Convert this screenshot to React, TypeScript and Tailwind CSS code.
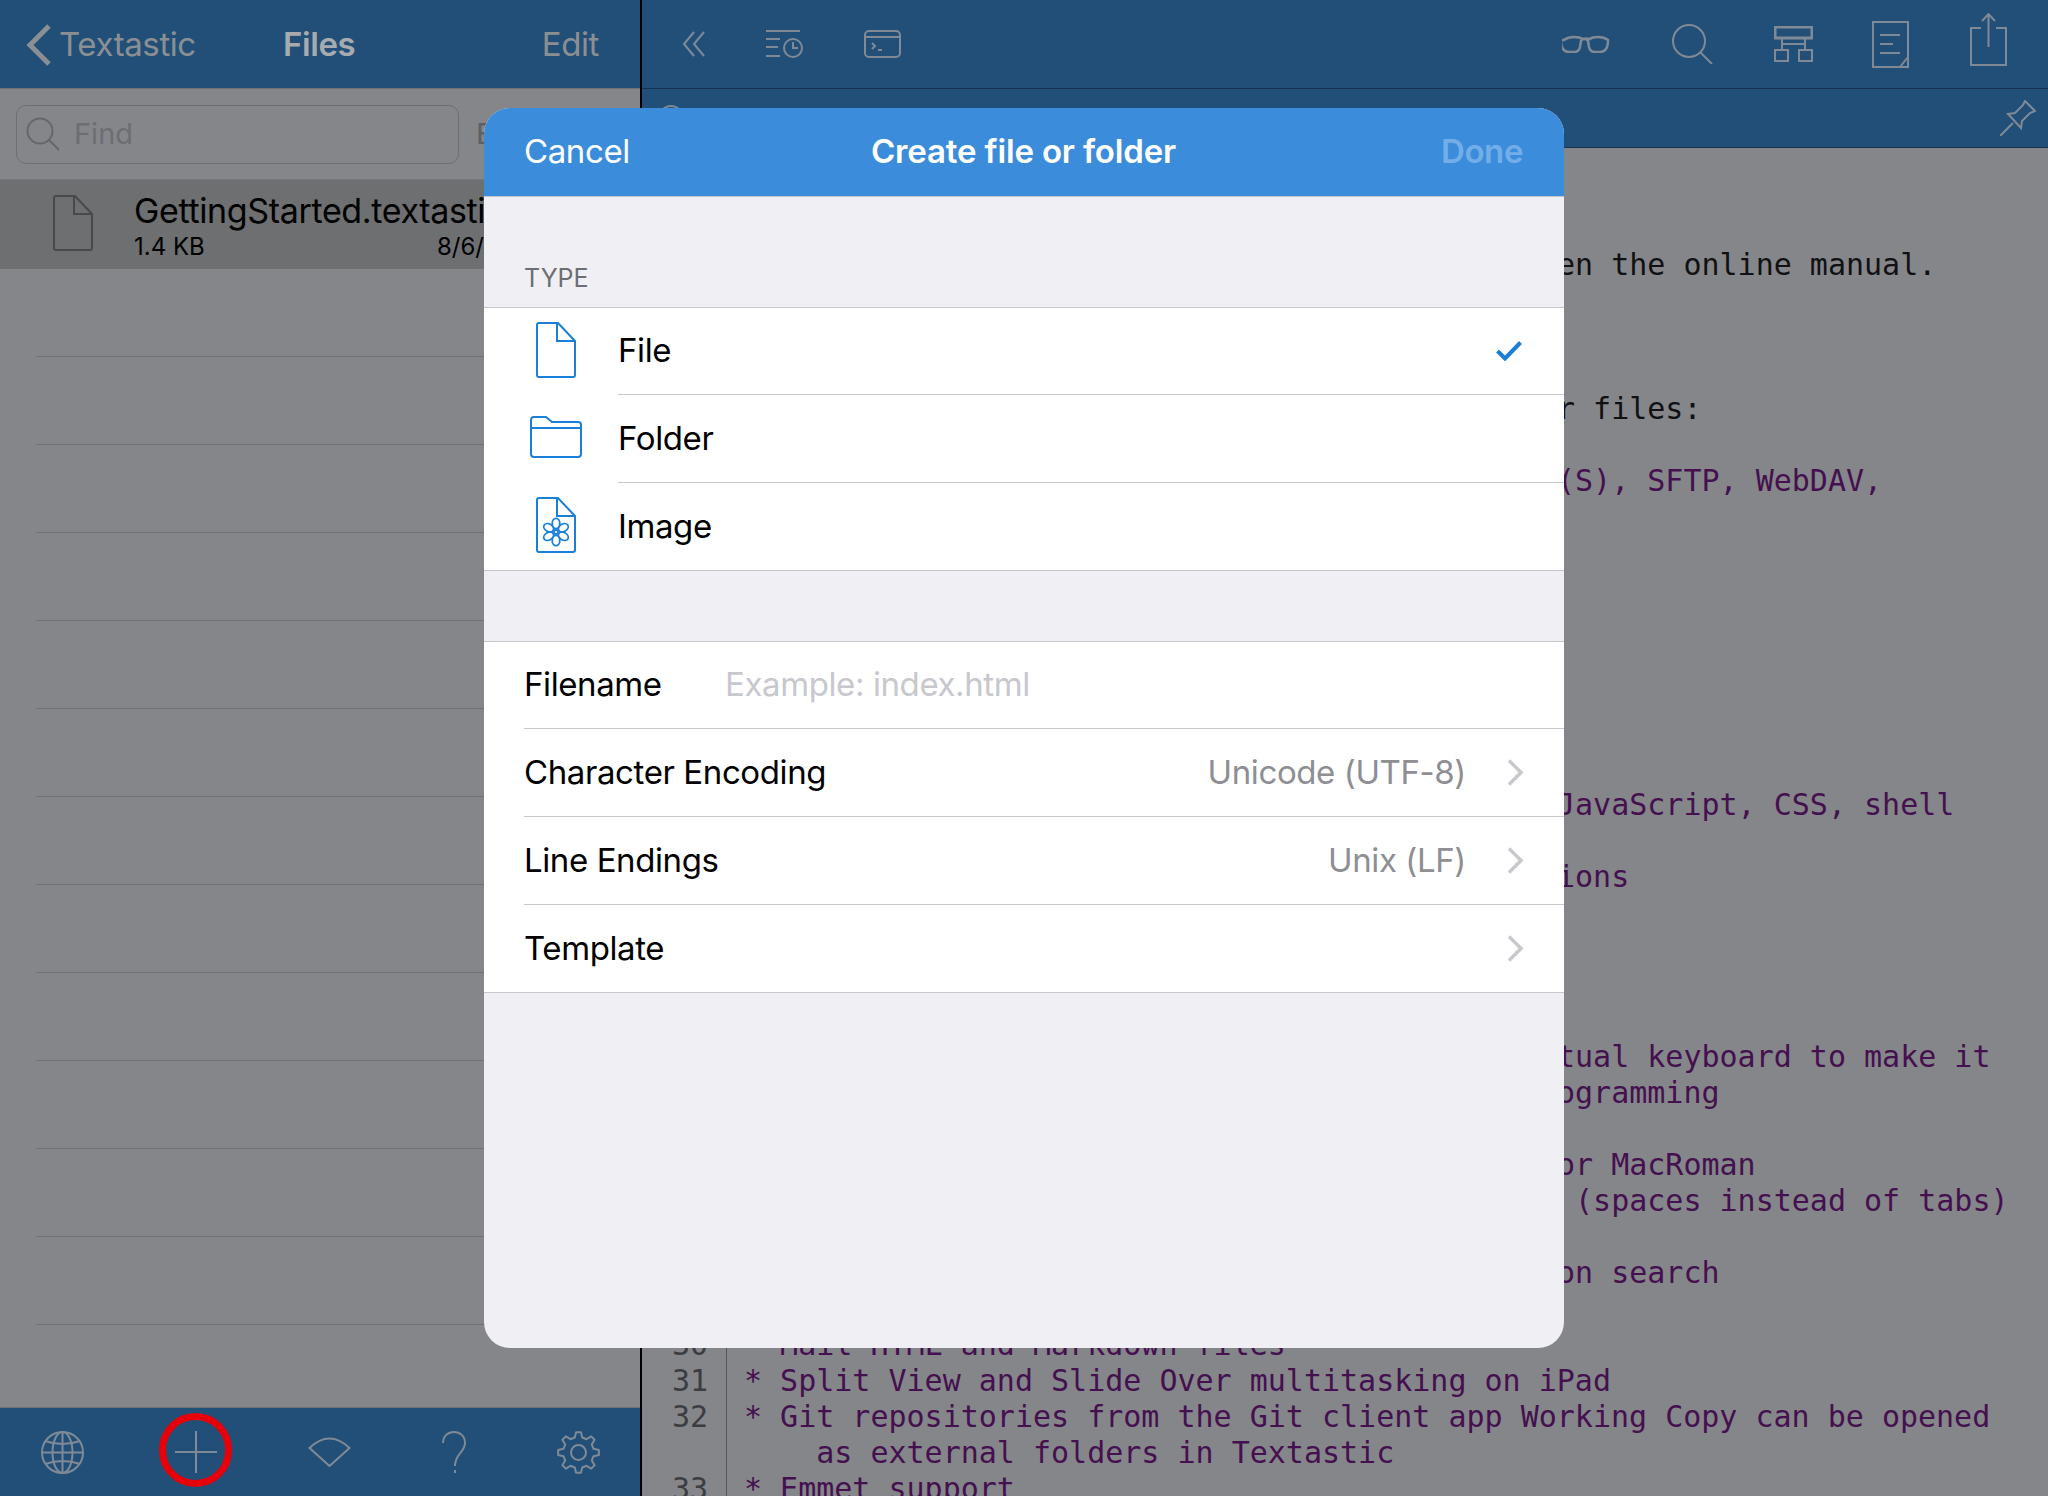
import React from "react";

const dim = "#7f8a96";

const gearPoints = () => {
  const pts: string[] = [];
  const teeth = 8;
  for (let i = 0; i < teeth; i++) {
    const a = (i * Math.PI * 2) / teeth - Math.PI / 2;
    const step = Math.PI / teeth;
    const r = [
      [15.5, -0.62],
      [20.5, -0.3],
      [20.5, 0.3],
      [15.5, 0.62],
    ];
    r.forEach(([rad, off]) => {
      const t = a + off * step;
      pts.push(`${(21.5 + rad * Math.cos(t)).toFixed(2)},${(21.5 + rad * Math.sin(t)).toFixed(2)}`);
    });
  }
  return pts.join(" ");
};

const DocIcon = ({ color, flower }: { color: string; flower?: boolean }) => (
  <svg width="40" height="56" viewBox="0 0 40 56" fill="none" stroke={color} strokeWidth="2">
    <path d="M1 3a2 2 0 0 1 2-2h19l17 18v34a2 2 0 0 1-2 2H3a2 2 0 0 1-2-2z" />
    <path d="M21 1v18h18" />
    {flower && (
      <g strokeWidth="1.8">
        {[0, 60, 120, 180, 240, 300].map((deg) => (
          <ellipse key={deg} cx="20" cy="26.5" rx="3.8" ry="5.200" transform={`rotate(${deg} 20 35)`} />
        ))}
        <circle cx="20" cy="35" r="2" />
      </g>
    )}
  </svg>
);

const FolderIcon = () => (
  <svg width="52" height="42" viewBox="0 0 52 42" fill="none" stroke="#1a7fd9" strokeWidth="2">
    <path d="M1 4a3 3 0 0 1 3-3h12l6 5h26a3 3 0 0 1 3 3v29a3 3 0 0 1-3 3H4a3 3 0 0 1-3-3z" />
    <path d="M1 12h50" />
  </svg>
);

const Chevron = () => (
  <svg width="17" height="27" viewBox="0 0 17 27" fill="none" stroke="#c7c7cc" strokeWidth="3.500">
    <path d="M2 1.500l12 12-12 12" />
  </svg>
);

const TopIcons = () => (
  <div className="flex-1 h-[89px] flex items-center pl-[40px] pr-[41px] border-b border-[#17324f]">
    <svg width="24" height="26" viewBox="0 0 24 26" fill="none" stroke={dim} strokeWidth="2">
      <path d="M12 1L2 13l10 12M22 1L12 13l10 12" />
    </svg>
    <svg className="ml-[60px]" width="37" height="28" viewBox="0 0 37 28" fill="none" stroke={dim} strokeWidth="2">
      <path d="M0 1h34M0 9h14M0 17h12M0 26h14" />
      <circle cx="27" cy="18" r="9" />
      <path d="M27 12v6h5" />
    </svg>
    <svg className="ml-[61px]" width="37" height="28" viewBox="0 0 37 28" fill="none" stroke={dim} strokeWidth="2">
      <rect x="1" y="1" width="35" height="26" rx="4" />
      <path d="M1 7h35M8 13l3 3-3 3M14 20h4" />
    </svg>
    <svg className="ml-auto" width="48" height="18" viewBox="0 0 48 18" fill="none" stroke={dim} strokeWidth="2.500">
      <path d="M2 5q4-3 10-3t8 2q4-1 8 0 2-2 8-2t10 3q0 6-2 9-2 3-6 3h-5q-5 0-6-5l-1-6q-1-2-4-2-2 0-3 2l-1 6q-1 5-6 5h-5q-4 0-6-3-2-3-2-9z" />
    </svg>
    <svg className="ml-[62px]" width="42" height="40" viewBox="0 0 42 40" fill="none" stroke={dim} strokeWidth="2">
      <circle cx="17" cy="17" r="16" />
      <path d="M28 28l12 12" />
    </svg>
    <svg className="ml-[60px]" width="39" height="36" viewBox="0 0 39 36" fill="none" stroke={dim} strokeWidth="2">
      <rect x="1" y="1" width="37" height="11" strokeWidth="3" />
      <rect x="1" y="24" width="13" height="11" />
      <rect x="25" y="24" width="13" height="11" />
      <path d="M8 12v12M31 12v12M8 18h23" />
    </svg>
    <svg className="ml-[59px]" width="37" height="47" viewBox="0 0 37 47" fill="none" stroke={dim} strokeWidth="2">
      <rect x="1" y="1" width="35" height="45" />
      <path d="M8 14h20M8 23h13M8 32h20M28 46l8-10" />
    </svg>
    <svg className="ml-[61px] -mt-[9px]" width="37" height="53" viewBox="0 0 37 53" fill="none" stroke={dim} strokeWidth="2">
      <path d="M11 15H1v37h35V15H26M18.500 34V1M12 8l6.500-7L25 8" />
    </svg>
  </div>
);

const Sidebar = () => (
  <div className="w-[640px] shrink-0 h-full flex flex-col bg-[#858689]">
    <div className="h-[89px] shrink-0 flex items-center bg-[#224f78] border-b border-[#6f7173] pl-[26px] pr-[41px] pt-[1px] relative text-[33px] tracking-[-0.4px] text-[#8b8f93]">
      <svg width="26" height="42" viewBox="0 0 26 42" fill="none" stroke="#8b8f93" strokeWidth="5">
        <path d="M23 2L4 21l19 19" />
      </svg>
      <span className="ml-[7px]">Textastic</span>
      <span className="absolute left-[283px] font-semibold text-[#a7abaf]">Files</span>
      <span className="ml-auto">Edit</span>
    </div>
    <div className="h-[91px] shrink-0 flex items-center pl-[16px] border-b border-[#77787b]">
      <div className="w-[443px] h-[59px] rounded-[10px] border border-[#6e6f72] flex items-center pl-[9px]">
        <svg width="34" height="34" viewBox="0 0 34 34" fill="none" stroke="#66676a" strokeWidth="2">
          <circle cx="14" cy="14" r="12.500" />
          <path d="M23 23l10 10" />
        </svg>
        <span className="ml-[14px] text-[29px] text-[#6d6e71]">Find</span>
      </div>
      <span className="ml-[17px] text-[29px] text-[#5f6063]">E</span>
    </div>
    <div className="h-[89px] shrink-0 bg-[#6e6f71] flex items-center relative pl-[53px]">
      <div className="-mt-[4px] flex">
        <DocIcon color="#48494b" />
      </div>
      <div className="ml-[41px] pt-[2px] text-black whitespace-nowrap">
        <div className="text-[34px] leading-[40px] tracking-[-0.35px]">GettingStarted.textastic</div>
        <div className="text-[24px] leading-[28px] pt-[2px] flex w-[350px] justify-between">
          <span>1.4 KB</span>
          <span>8/6/</span>
        </div>
      </div>
    </div>
    <div className="flex-1 min-h-0 overflow-hidden">
      {Array.from({ length: 13 }).map((_, i) => (
        <div key={i} className="h-[88px] ml-[36px] border-b border-[#6f7073]" />
      ))}
    </div>
    <div className="h-[89px] shrink-0 bg-[#224f78] border-t border-[#6f7173] flex items-center justify-between pl-[41px] pr-[40px] relative">
      <svg width="43" height="43" viewBox="0 0 43 43" fill="none" stroke={dim} strokeWidth="2">
        <circle cx="21.500" cy="21.500" r="20.500" />
        <ellipse cx="21.500" cy="21.500" rx="10" ry="20.500" />
        <path d="M21.500 1v41M1 21.500h41M4 10q17.500 6 35 0M4 33q17.500-6 35 0" />
      </svg>
      <svg width="42" height="42" viewBox="0 0 42 42" fill="none" stroke={dim} strokeWidth="2">
        <path d="M21 0v42M0 21h42" />
      </svg>
      <svg width="43" height="30" viewBox="0 0 43 30" fill="none" stroke={dim} strokeWidth="2">
        <path d="M1.500 11q20-19 40 0L21.500 29z" />
      </svg>
      <svg width="24" height="42" viewBox="0 0 24 42" fill="none" stroke={dim} strokeWidth="2">
        <path d="M1 12C1 5 6 1 12 1s11 4 11 11c0 9-10 11-10 23M13 39v3" />
      </svg>
      <svg width="43" height="43" viewBox="0 0 43 43" fill="none" stroke={dim} strokeWidth="2">
        <polygon points={gearPoints()} strokeLinejoin="round" />
        <circle cx="21.500" cy="21.500" r="7.500" />
      </svg>
      {/* hand-drawn red annotation ring */}
      <div className="absolute left-[159px] top-[5px] w-[73px] h-[74px] rounded-full border-[7px] border-[#e6000a]" />
    </div>
  </div>
);

type CodeRow = { n?: string; text?: string; dark?: boolean; frag?: boolean };

// rows behind the dialog only keep what shows to the right of it
const codeRows: CodeRow[] = (() => {
  const rows: CodeRow[] = Array.from({ length: 35 }, () => ({}));
  rows[0] = { frag: true, text: "en the online manual.", dark: true };
  rows[4] = { frag: true, text: "r files:", dark: true };
  rows[6] = { frag: true, text: "(S), SFTP, WebDAV," };
  rows[15] = { frag: true, text: "JavaScript, CSS, shell" };
  rows[17] = { frag: true, text: "ions" };
  rows[22] = { frag: true, text: "tual keyboard to make it" };
  rows[23] = { frag: true, text: "ogramming" };
  rows[25] = { frag: true, text: "or MacRoman" };
  rows[26] = { frag: true, text: " (spaces instead of tabs)" };
  rows[28] = { frag: true, text: "on search" };
  rows[30] = { n: "30", text: "* Mail HTML and Markdown files" };
  rows[31] = { n: "31", text: "* Split View and Slide Over multitasking on iPad" };
  rows[32] = { n: "32", text: "* Git repositories from the Git client app Working Copy can be opened" };
  rows[33] = { text: "    as external folders in Textastic" };
  rows[34] = { n: "33", text: "* Emmet support" };
  return rows;
})();

const Editor = () => (
  <div className="flex-1 min-w-0 h-full flex flex-col bg-[#858689] border-l-2 border-black">
    <div className="h-[89px] shrink-0 flex bg-[#224f78]">
      <TopIcons />
    </div>
    <div className="h-[59px] shrink-0 bg-[#224f78] border-b border-[#17324f] flex items-center justify-between pl-[16px] pr-[12px]">
      <div className="w-[26px] h-[26px] rounded-full border-2 border-[#7f8a96]" />
      <svg width="36" height="36" viewBox="0 0 36 36" fill="none" stroke={dim} strokeWidth="2">
        <path d="M0 36l13-13" />
        <path d="M25 1l10 10-5 2-8 8-1 7L8 14l7-1 8-8z" />
      </svg>
    </div>
    <div className="flex-1 min-h-0 overflow-hidden pt-[99px] [font-family:'DejaVu_Sans_Mono',monospace] text-[30px] leading-[36px]">
      {codeRows.map((row, i) => (
        <div key={i} className="h-[36px] flex whitespace-pre">
          <div className="w-[85px] shrink-0 border-r border-[#56575a] pr-[18px] text-right text-[#3c3d40]">{row.n}</div>
          {row.text && (
            <div className={`${row.frag ? "pl-[830px]" : "pl-[17px]"} ${row.dark ? "text-[#111113]" : "text-[#44104f]"}`}>{row.text}</div>
          )}
        </div>
      ))}
    </div>
  </div>
);

const TypeRow = ({ label, icon, checked, tall, last }: { label: string; icon: React.ReactNode; checked?: boolean; tall?: boolean; last?: boolean }) => (
  <div className={`${tall ? "h-[88px]" : "h-[87px]"} flex items-center`}>
    <div className="w-[144px] -mr-[10px] -mt-[4px] shrink-0 flex justify-center">{icon}</div>
    <div className={`flex-1 h-full flex items-center pr-[42px] text-[33px] tracking-[-0.4px] text-black ${last ? "" : "border-b border-[#c8c7cc]"}`}>
      <span>{label}</span>
      {checked && (
        <svg className="ml-auto" width="26" height="20" viewBox="0 0 26 20" fill="none" stroke="#1a7fd9" strokeWidth="4">
          <path d="M1.500 10l7.500 7.500L24.500 1.500" />
        </svg>
      )}
    </div>
  </div>
);

const FormRow = ({ label, value, last }: { label: string; value?: string; last?: boolean }) => (
  <div className={`${last ? "h-[87px]" : "h-[88px]"} pl-[40px]`}>
    <div className={`h-full flex items-center pr-[40px] text-[33px] tracking-[-0.4px] ${last ? "" : "border-b border-[#c8c7cc]"}`}>
      <span className="text-black">{label}</span>
      {value && <span className="ml-auto text-[#8e8e93]">{value}</span>}
      <span className={value ? "ml-[41px] flex" : "ml-auto flex"}>
        <Chevron />
      </span>
    </div>
  </div>
);

const Modal = () => (
  <div className="absolute left-[484px] top-[108px] w-[1080px] h-[1240px] rounded-[26px] overflow-hidden bg-[#efeff4] flex flex-col">
    <div className="h-[89px] shrink-0 bg-[#3b8ddb] grid grid-cols-[1fr_auto_1fr] items-center pl-[40px] pr-[41px] text-[33px] tracking-[-0.4px] border-b border-[#bfc5cc]">
      <span className="text-white">Cancel</span>
      <span className="text-white font-semibold tracking-[-0.15px]">Create file or folder</span>
      <span className="text-[#74aee8] font-semibold text-right">Done</span>
    </div>
    <div className="h-[111px] shrink-0 flex items-end pl-[40px] pb-[13px] text-[25px] leading-[32px] text-[#6d6d72] border-b border-[#c8c7cc]">
      TYPE
    </div>
    <div className="shrink-0 bg-white border-b border-[#c8c7cc]">
      <TypeRow label="File" checked icon={<DocIcon color="#1a7fd9" />} />
      <TypeRow label="Folder" tall icon={<FolderIcon />} />
      <TypeRow label="Image" last icon={<DocIcon color="#1a7fd9" flower />} />
    </div>
    <div className="h-[71px] shrink-0 border-b border-[#c8c7cc]" />
    <div className="shrink-0 bg-white border-b border-[#c8c7cc]">
      <div className="h-[87px] pl-[40px]">
        <div className="h-full flex items-center text-[33px] tracking-[-0.4px] border-b border-[#c8c7cc]">
          <span className="w-[201px] text-black">Filename</span>
          <span className="text-[#c7c7cd]">Example: index.html</span>
        </div>
      </div>
      <FormRow label="Character Encoding" value="Unicode (UTF-8)" />
      <FormRow label="Line Endings" value="Unix (LF)" />
      <FormRow label="Template" last />
    </div>
  </div>
);

export default function App() {
  return (
    <div className="relative w-[2048px] h-[1496px] overflow-hidden flex [font-family:Inter,'Liberation_Sans',sans-serif]">
      <Sidebar />
      <Editor />
      <Modal />
    </div>
  );
}
